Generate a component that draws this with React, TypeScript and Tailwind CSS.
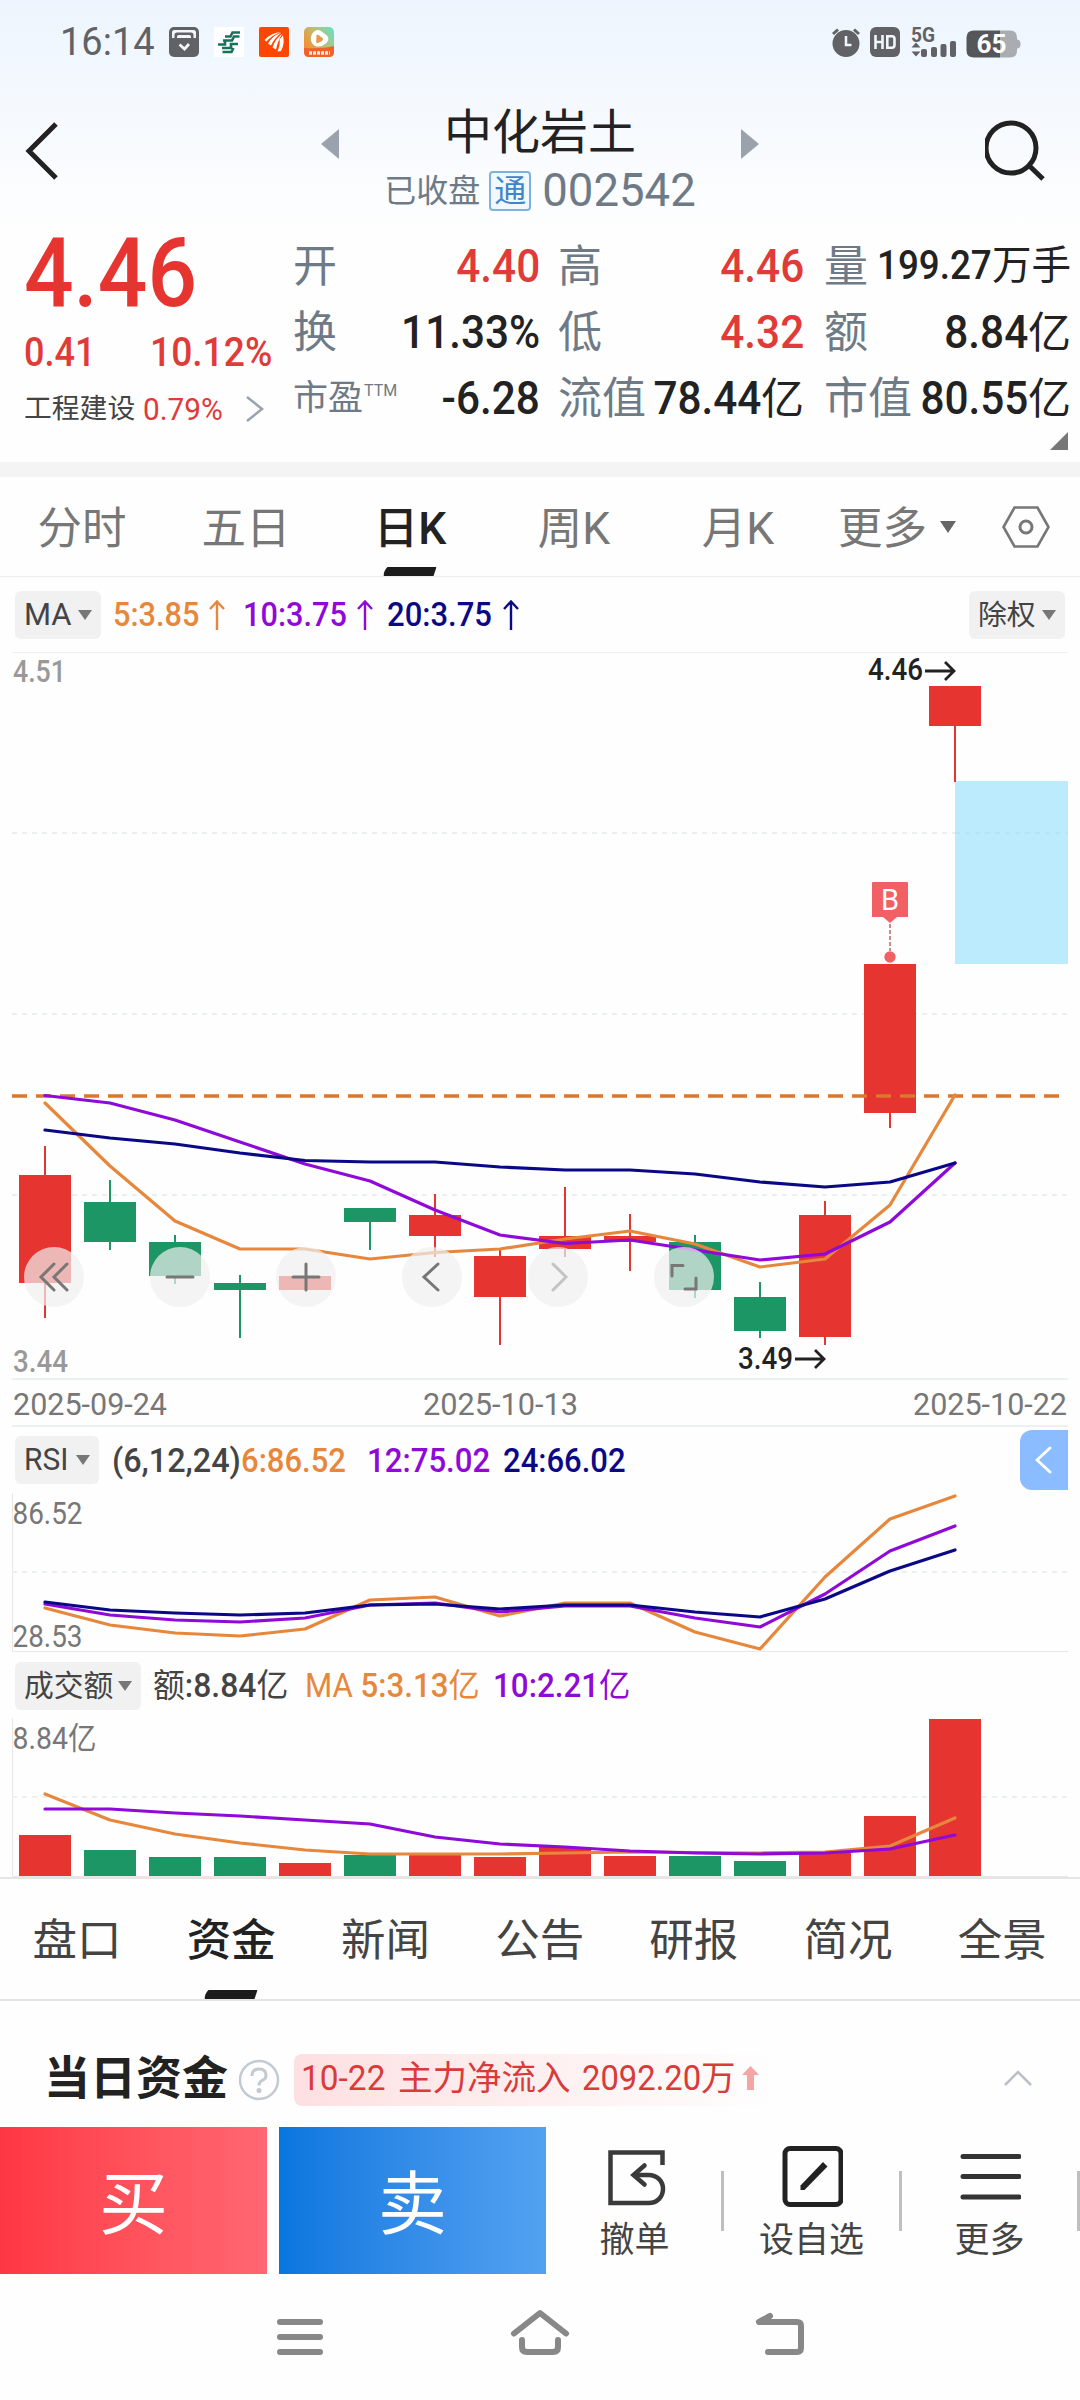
import type { ReactNode } from "react";
import clsx from "clsx";

const RED = "#e63431";
const GREEN = "#1b9664";
const ORANGE = "#e6873c";
const PURPLE = "#8f09d8";
const NAVY = "#0b0886";

type Candle = { open: number; close: number; high: number; low: number; up: boolean };

// y positions inside the price panel
const candles: Candle[] = [
  { open: 1175, close: 1283, high: 1146, low: 1318, up: true },
  { open: 1202, close: 1242, high: 1180, low: 1250, up: false },
  { open: 1242, close: 1276, high: 1235, low: 1284, up: false },
  { open: 1283, close: 1290, high: 1275, low: 1338, up: false },
  { open: 1276, close: 1290, high: 1276, low: 1290, up: true },
  { open: 1208, close: 1222, high: 1208, low: 1250, up: false },
  { open: 1215, close: 1236, high: 1194, low: 1257, up: true },
  { open: 1256, close: 1297, high: 1250, low: 1345, up: true },
  { open: 1236, close: 1249, high: 1187, low: 1257, up: true },
  { open: 1236, close: 1242, high: 1214, low: 1271, up: true },
  { open: 1242, close: 1290, high: 1235, low: 1298, up: false },
  { open: 1297, close: 1331, high: 1282, low: 1338, up: false },
  { open: 1215, close: 1337, high: 1201, low: 1345, up: true },
  { open: 964, close: 1113, high: 964, low: 1128, up: true },
  { open: 686, close: 726, high: 686, low: 782, up: true },
];

const ma5 = [1103, 1166, 1221, 1249, 1249, 1259, 1252.5, 1249, 1239, 1231, 1244, 1267, 1259, 1205, 1095];
const ma10 = [1095.5, 1103, 1120, 1142, 1164, 1181, 1210, 1235, 1243.5, 1240, 1250, 1260, 1254, 1222, 1163];
const ma20 = [1130, 1138, 1144, 1153, 1160.5, 1162, 1162, 1167, 1170, 1170, 1174, 1182, 1187, 1182, 1163];

const rsi6 = [1608, 1625, 1633, 1636, 1629, 1600, 1597, 1616, 1603, 1603, 1632, 1649, 1577, 1519, 1496];
const rsi12 = [1604, 1615, 1620, 1622, 1618, 1605, 1603, 1612, 1606, 1606, 1618, 1627, 1594, 1551, 1526];
const rsi24 = [1602, 1610, 1613, 1615, 1613, 1605, 1604, 1609, 1605, 1605, 1612, 1617, 1599, 1571, 1550];

const volume = [1835, 1850, 1857, 1857, 1863, 1855, 1855, 1857, 1847, 1856, 1856, 1861, 1853, 1816, 1719];
const vol5 = [1794, 1820, 1834, 1843, 1850, 1854, 1854, 1854, 1853, 1852, 1852.5, 1853, 1852, 1846, 1818];
const vol10 = [1809, 1809, 1813, 1816, 1820, 1824, 1837, 1844, 1847, 1851, 1853, 1854, 1853, 1849, 1835];

const xAt = (i: number) => 45 + i * 65;

const Line = ({ values, color }: { values: number[]; color: string }) => (
  <polyline
    points={values.map((y, i) => `${xAt(i)},${y}`).join(" ")}
    fill="none"
    stroke={color}
    strokeWidth={3.2}
    strokeLinejoin="round"
    strokeLinecap="round"
  />
);

const Grid = ({ y }: { y: number }) => (
  <line x1={12} x2={1068} y1={y} y2={y} stroke="#ebefef" strokeWidth={2} strokeDasharray="5 5" />
);

type LabelProps = { x: number; y: number; width: number; color: string; weight?: number; children: ReactNode };

const Label = ({ x, y, width, color, weight = 400, children }: LabelProps) => (
  <text x={x} y={y} fill={color} fontSize={30.5} fontWeight={weight} textLength={width} lengthAdjust="spacingAndGlyphs">
    {children}
  </text>
);

const Caret = ({ className }: { className?: string }) => (
  <svg viewBox="0 0 14 10" className={clsx("h-[10px] w-[14px] shrink-0", className)}>
    <path d="M0 0H14L7 10Z" fill="#777" />
  </svg>
);

const StatusBar = () => (
  <div className="flex h-[84px] items-center pl-[60px] pr-[59px]">
    <span className="w-[109px] text-[38px] text-[#606266]">16:14</span>
    <div className="flex gap-[15px]">
      <svg viewBox="0 0 30 30" className="size-[30px]">
        <rect width="30" height="30" rx="5" fill="#606266" />
        <path d="M3 11V5.500Q3 3 5.500 3H24.500Q27 3 27 5.500V11H24.500V8Q24.500 5.500 22 5.500H8Q5.500 5.500 5.500 8V11Z" fill="#f1f6fd" />
        <path d="M8 11V9.500Q8 8 9.500 8H20.500Q22 8 22 9.500V11Z" fill="#f1f6fd" />
        <path d="M10.500 17.500L15.500 22L20 17" fill="none" stroke="#f1f6fd" strokeWidth="2.800" />
      </svg>
      <svg viewBox="0 0 30 30" className="size-[30px] bg-white">
        <g fill="none" stroke="#17725c" strokeWidth="2.600">
          <path d="M26 5.500H18.500L16.500 9.500H11" />
          <path d="M25.500 9.500H20L18 13.500H9" />
          <path d="M4 17.500H11V13.500" />
          <path d="M24 17H17V21H8" />
          <path d="M19.500 21L17.500 25H8.500" />
        </g>
      </svg>
      <svg viewBox="0 0 30 30" className="size-[30px]">
        <rect width="30" height="30" rx="2" fill="#fe4603" />
        <path d="M5.500 13Q11 6.500 21.500 5Q12.500 8.500 7.500 14.500Z" fill="#fff" />
        <path d="M9 16.500Q13 9 22.500 5.500Q15.500 11 12 18.500Z" fill="#fff" />
        <path d="M13.500 20.500Q16 12 23.500 6.500Q19 13 17 22.500Z" fill="#fff" />
        <path d="M18.500 24.500Q21.500 17 20.500 12.500L24 8.500Q26 17 22 24Z" fill="#fff" />
      </svg>
      <svg viewBox="0 0 30 30" className="size-[30px]">
        <defs>
          <linearGradient id="tv" x1="0" y1=".6" x2="1" y2="0">
            <stop offset="0" stopColor="#f68e2e" />
            <stop offset=".5" stopColor="#b9c07a" />
            <stop offset="1" stopColor="#5fe3cd" />
          </linearGradient>
        </defs>
        <rect width="30" height="30" rx="5" fill="url(#tv)" />
        <path d="M0 21Q18 22 30 19V25Q30 30 25 30H5Q0 30 0 25Z" fill="#f0622a" />
        <path d="M12 3.500Q14 2.500 17 4L23 8.500Q26 12 22.500 16Q17 21 11 19Q6 16 7 10Q8 5 12 3.500Z" fill="#fff" />
        <path d="M12.500 8.500Q13 7.500 14.500 8L18.500 11Q20 12.500 18 14L14 16Q12.500 16.500 12.200 15Z" fill="#e79a4b" />
        <path d="M5 26H26" stroke="#ffe9da" strokeWidth="3.500" strokeDasharray="3 1" />
      </svg>
    </div>

    <div className="ml-auto flex items-center">
      <svg viewBox="0 0 30 29" className="mr-[9px] h-[29px] w-[30px]">
        <circle cx="15" cy="15.500" r="13.500" fill="#606266" />
        <path d="M2 6L7 1.500M28 6L23 1.500" stroke="#606266" strokeWidth="3" />
        <path d="M15 8V17H20.500" fill="none" stroke="#f1f6fd" strokeWidth="2.500" />
      </svg>
      <svg viewBox="0 0 30 30" className="mr-[11px] size-[30px]">
        <rect width="30" height="30" rx="6" fill="#606266" />
        <g fill="none" stroke="#f1f6fd" strokeWidth="2.600">
          <path d="M5.500 8V22M12.500 8V22M5.500 15H12.500" />
          <path d="M17.300 9.300H22Q24.500 9.300 24.500 12V18Q24.500 20.700 22 20.700H17.300Z" />
        </g>
      </svg>
      <svg viewBox="0 -5 45 35" className="-mt-[5px] mr-[10px] h-[35px] w-[45px]" fill="#606266">
        <text x="0" y="14.500" fontSize="19.500" fontWeight="700" textLength="24" lengthAdjust="spacingAndGlyphs">5G</text>
        <path d="M5 15.500L9.500 20.500H0.500ZM5 29.500L9.500 24.500H0.500Z" />
        <rect x="10" y="22" width="6" height="8" rx="2" />
        <rect x="20" y="20" width="6" height="10" rx="2" />
        <rect x="29.500" y="17" width="6" height="13" rx="2" />
        <rect x="39" y="14" width="6" height="16" rx="2" />
      </svg>
      <svg viewBox="0 0 55 28" className="mt-[3px] h-[28px] w-[55px]">
        <path d="M33 .5H44Q51 .5 51 7.500V9.500Q54.500 9.500 54.500 14T51 18.500V20.500Q51 27.500 44 27.500H33Z" fill="#a9acb1" />
        <path d="M8 .5H34V27.500H8Q.5 27.500 .5 20.500V7.500Q.5 .5 8 .5Z" fill="#545659" />
        <text x="10.500" y="23.200" fontSize="25" fontWeight="700" fill="#fff" textLength="30" lengthAdjust="spacingAndGlyphs">65</text>
      </svg>
    </div>
  </div>
);

const TitleBar = () => (
  <div className="flex h-[148px] items-start pl-[24px] pr-[33px]">
    <svg viewBox="0 0 35 60" className="mt-[37px] h-[60px] w-[35px]">
      <path d="M32 3L5 30L32 57" fill="none" stroke="#222" strokeWidth="5" />
    </svg>
    <div className="ml-[262px] flex items-start">
      <svg viewBox="0 0 18 30" className="mt-[45px] h-[30px] w-[18px]">
        <path d="M18 0V30L0 15Z" fill="#9aa3ad" />
      </svg>
      <div className="flex w-[402px] flex-col items-center pt-[25px]">
        <h1 className="text-[48px] font-normal text-[#222]">中化岩土</h1>
        <div className="mt-[13px] flex h-[41px] items-center text-[#6e7a86]">
          <span className="mr-[9px] text-[32px]">已收盘</span>
          <span className="mr-[11px] flex h-[40px] w-[42px] items-center justify-center rounded-[4px] border-2 border-[#7db2df] bg-[#f1f8ff] text-[32px] text-[#3f86c8]">
            通
          </span>
          <span className="text-[45.500px]">002542</span>
        </div>
      </div>
      <svg viewBox="0 0 18 30" className="mt-[45px] h-[30px] w-[18px]">
        <path d="M0 0V30L18 15Z" fill="#9aa3ad" />
      </svg>
    </div>
    <svg viewBox="0 0 62 62" className="ml-auto mt-[36px] size-[62px]">
      <circle cx="26" cy="28" r="25" fill="none" stroke="#222" strokeWidth="5" />
      <path d="M44 45.500L58 59" stroke="#222" strokeWidth="5" />
    </svg>
  </div>
);

type StatProps = { label: ReactNode; children: ReactNode; red?: boolean };

const Stat = ({ label, children, red }: StatProps) => (
  <div className="flex h-[66px] items-center justify-between whitespace-nowrap">
    <span className="pt-[3px] text-[44px] text-[#6e7a86]">{label}</span>
    <span
      className={clsx(
        "flex w-0 items-baseline justify-end pt-px text-[46px] font-medium",
        red ? "text-[#e03b38]" : "text-[#222]",
      )}
    >
      {children}
    </span>
  </div>
);

const Num = ({ children }: { children: ReactNode }) => (
  <span className="inline-block origin-right scale-x-[.92]">{children}</span>
);

const Unit = ({ children }: { children: ReactNode }) => <span className="text-[43px] font-normal">{children}</span>;

const Quote = () => (
  <section className="flex h-[230px]">
    <div className="w-[293px] pl-[24px]">
      <div className="mt-[-7px] h-[98px] origin-left scale-x-[.9] text-[97px] font-medium text-[#e63431]">4.46</div>
      <div className="mt-[10px] flex h-[40px] text-[40px] font-medium text-[#e03b38]">
        <span className="w-[126px] origin-left scale-x-[.9]">0.41</span>
        <span className="origin-left scale-x-[.93]">10.12%</span>
      </div>
      <div className="mt-[20px] flex h-[32px] items-center whitespace-nowrap">
        <span className="w-[119px] text-[27.800px] text-[#444]">工程建设</span>
        <span className="w-[103px] origin-left scale-x-[.96] text-[31px] text-[#e03b38]">0.79%</span>
        <svg viewBox="0 0 18 26" className="h-[26px] w-[18px]">
          <path d="M1 1L16 13L1 25" fill="none" stroke="#9aa3ad" strokeWidth="2.500" />
        </svg>
      </div>
    </div>
    <div className="w-[247px]">
      <Stat label="开" red><Num>4.40</Num></Stat>
      <Stat label="换"><Num>11.33%</Num></Stat>
      <Stat label={<span className="flex items-start text-[35px]">市盈<sup className="top-[2px] ml-px text-[16px]">TTM</sup></span>}>
        <Num>-6.28</Num>
      </Stat>
    </div>
    <div className="ml-[18px] w-[246px]">
      <Stat label="高" red><Num>4.46</Num></Stat>
      <Stat label="低" red><Num>4.32</Num></Stat>
      <Stat label="流值"><Num>78.44</Num><Unit>亿</Unit></Stat>
    </div>
    <div className="ml-[20px] w-[247px]">
      <Stat label="量">
        <span className="text-[40px]"><Num>199.27</Num></span>
        <span className="text-[39.500px] font-normal">万手</span>
      </Stat>
      <Stat label="额"><Num>8.84</Num><Unit>亿</Unit></Stat>
      <Stat label="市值"><Num>80.55</Num><Unit>亿</Unit></Stat>
      <svg viewBox="0 0 18 18" className="ml-auto mr-[3px] mt-[2px] size-[18px]">
        <path d="M18 0V18H0Z" fill="#777" />
      </svg>
    </div>
  </section>
);

const Underline = () => (
  <svg viewBox="0 0 53 9" className="absolute bottom-0 left-1/2 h-[9px] w-[53px] -translate-x-1/2">
    <path d="M4 0H53L50 9H0Q0 4 4 0Z" fill="#1c1c1c" />
  </svg>
);

const PeriodTabs = () => (
  <nav className="flex h-[100px] items-center border-b border-[#eee] text-[44.500px] text-[#777]">
    {["分时", "五日", "日K", "周K", "月K"].map((tab) => (
      <div
        key={tab}
        className={clsx(
          "relative flex h-full w-[164px] items-center justify-center pt-[5px]",
          tab === "日K" && "font-medium text-[#222]",
        )}
      >
        {tab}
        {tab === "日K" && <Underline />}
      </div>
    ))}
    <span className="ml-[18px] mr-[13px] pt-[5px]">更多</span>
    <svg viewBox="0 0 16 12" className="h-[12px] w-[16px]">
      <path d="M0 0H16L8 12Z" fill="#666" />
    </svg>
    <svg viewBox="0 0 48 42" className="ml-[46px] h-[42px] w-[48px]" fill="none" stroke="#777" strokeWidth="2.600">
      <path d="M12.500 1.500H35.500L46.500 21L35.500 40.500H12.500L1.500 21Z" />
      <circle cx="24" cy="21" r="6" strokeWidth="3" />
    </svg>
  </nav>
);

const Chip = ({ className, children }: { className: string; children: ReactNode }) => (
  <button className={clsx("flex h-[48px] items-center justify-between rounded-[6px] bg-[#f1f1f1] pl-[9px] pr-[9px] text-[#444]", className)}>
    {children}
    <Caret />
  </button>
);

const UpArrow = () => (
  <svg viewBox="0 0 16 30" className="h-[30px] w-[16px]" fill="none" stroke="currentColor" strokeWidth="2.400">
    <path d="M8 30V2M1 9L8 1.500L15 9" />
  </svg>
);

const Legend = ({ className, children }: { className: string; children: ReactNode }) => (
  <span className={clsx("shrink-0 origin-left whitespace-nowrap text-[33px] font-medium", className)}>{children}</span>
);

const MaLegend = () => (
  <div className="flex h-[75px] items-center pl-[15px] pr-[15px]">
    <Chip className="mr-[12px] w-[86px] text-[31px]">MA</Chip>
    <div className="flex items-center text-[#e6873c]">
      <Legend className="w-[96px]"><span className="inline-block origin-left scale-x-[.93]">5:3.85</span></Legend>
      <UpArrow />
    </div>
    <div className="ml-[18px] flex items-center text-[#8f09d8]">
      <Legend className="w-[114px]"><span className="inline-block origin-left scale-x-[.93]">10:3.75</span></Legend>
      <UpArrow />
    </div>
    <div className="ml-[14px] flex items-center text-[#0b0886]">
      <Legend className="w-[116px]"><span className="inline-block origin-left scale-x-[.94]">20:3.75</span></Legend>
      <UpArrow />
    </div>
    <Chip className="ml-auto w-[96px] text-[28.800px]"><span className="pt-[2px]">除权</span></Chip>
  </div>
);

const controls = [
  <path d="M30 17L17 30L30 43M43 17L30 30L43 43" />,
  <path d="M17 30H43" />,
  <path d="M17 30H43M30 17V43" />,
  <path d="M36 17L22 30L36 43" />,
  <path d="M25 17L38 30L25 43" stroke="#c4c4c4" />,
  <path d="M29 18.500H18V29M31 42H42V31" />,
];

const PriceChart = () => (
  <div className="relative h-[775px]">
    <svg viewBox="0 652 1080 775" className="h-[775px] w-[1080px]">
      <path d="M12 652.500H1068" stroke="#eee" />
      <Grid y={833} />
      <Grid y={1014} />
      <Grid y={1195} />
      <path d="M12 1379H1068M12 1426H1068" stroke="#edf0f1" strokeWidth={2} />
      <rect x={955} y={781} width={113} height={183} fill="#bdebfe" />
      <path d="M955 833H1068" stroke="#b6e4f6" strokeWidth={2} strokeDasharray="5 5" />

      {candles.map((c, i) => (
        <g key={i} fill={c.up ? RED : GREEN}>
          <rect x={xAt(i) - 1} y={c.high} width={2} height={c.low - c.high} />
          <rect x={xAt(i) - 26} y={c.open} width={52} height={c.close - c.open} />
        </g>
      ))}

      <path d="M12 1096H1068" stroke="#dc772e" strokeWidth={3.5} strokeDasharray="15 9" />
      <Line values={ma5} color={ORANGE} />
      <Line values={ma10} color={PURPLE} />
      <Line values={ma20} color={NAVY} />

      {/* buy marker */}
      <path d="M873 882H907Q908 882 908 883V917H897L890 923L883 917H872V883Q872 882 873 882Z" fill="#f06065" />
      <text x={890} y={909.500} fontSize={29} fill="#fff" textAnchor="middle">B</text>
      <path d="M890 924V951" stroke="#c98b8b" strokeWidth={2} strokeDasharray="4 2" />
      <circle cx={890} cy={957} r={5.700} fill="#f06065" />

      <Label x={868} y={680} width={55} color="#222" weight={500}>4.46</Label>
      <path d="M925 671H954M945 662L954 671L945 680" fill="none" stroke="#222" strokeWidth={2.800} />
      <Label x={738} y={1369} width={55} color="#222" weight={500}>3.49</Label>
      <path d="M795 1359H824M815 1350L824 1359L815 1368" fill="none" stroke="#222" strokeWidth={2.800} />

      <Label x={13} y={682} width={53} color="#999" weight={500}>4.51</Label>
      <Label x={13} y={1372} width={55} color="#999" weight={500}>3.44</Label>
      <Label x={13} y={1415} width={154} color="#777">2025-09-24</Label>
      <Label x={423} y={1415} width={155} color="#777">2025-10-13</Label>
      <Label x={913} y={1415} width={154} color="#777">2025-10-22</Label>
    </svg>
    <div className="absolute left-[24px] top-[595px] flex gap-[66px]">
      {controls.map((icon, i) => (
        <button key={i} className="size-[60px] rounded-full bg-[#f0f0f0]/70">
          <svg viewBox="0 0 60 60" className="size-[60px]" fill="none" stroke="#777" strokeWidth="3" strokeLinecap="round">
            {icon}
          </svg>
        </button>
      ))}
    </div>
  </div>
);

const RsiPanel = () => (
  <section className="relative">
    <div className="flex h-[66px] items-center pl-[15px]">
      <Chip className="mr-[13px] w-[84px] text-[30.500px]">
        <span className="-mr-2 origin-left scale-x-[.98]">RSI</span>
      </Chip>
      <Legend className="w-[129px] text-[#444]"><span className="inline-block origin-left scale-x-[.98]">(6,12,24)</span></Legend>
      <Legend className="w-[126px]"><span className="inline-block origin-left scale-x-[.94] text-[#e6873c]">6:86.52</span></Legend>
      <Legend className="w-[136px]"><span className="inline-block origin-left scale-x-[.945] text-[#8f09d8]">12:75.02</span></Legend>
      <Legend className="scale-x-[.94] text-[#0b0886]">24:66.02</Legend>
    </div>
    <svg viewBox="0 1493 1080 160" className="h-[160px] w-[1080px]">
      <path d="M12.500 1493V1651.500H1068" fill="none" stroke="#e8e8e8" />
      <Grid y={1572} />
      <Label x={12.500} y={1524} width={70} color="#777">86.52</Label>
      <Label x={12.500} y={1647} width={70} color="#777">28.53</Label>
      <Line values={rsi6} color={ORANGE} />
      <Line values={rsi12} color={PURPLE} />
      <Line values={rsi24} color={NAVY} />
    </svg>
    <button className="absolute right-[12px] top-[3px] flex h-[60px] w-[48px] items-center rounded-l-[12px] bg-[#8abcff] pl-[15px]">
      <svg viewBox="0 0 18 30" className="h-[30px] w-[18px]">
        <path d="M15 3L2 15L15 27" fill="none" stroke="#fff" strokeWidth="2.800" strokeLinecap="round" />
      </svg>
    </button>
  </section>
);

const VolumePanel = () => (
  <section>
    <div className="flex h-[65px] items-center pl-[15px]">
      <Chip className="mr-[12px] w-[126px] text-[29.800px]"><span className="pt-px">成交额</span></Chip>
      <Legend className="w-[152px] text-[#444]">
        <span className="inline-block origin-left scale-x-[.965]"><span className="font-normal">额</span>:8.84<span className="font-normal">亿</span></span>
      </Legend>
      <Legend className="w-[188px] text-[#e6873c]">
        <span className="inline-block origin-left scale-x-[.945]"><span className="font-normal">MA</span> 5:3.13<span className="font-normal">亿</span></span>
      </Legend>
      <Legend className="scale-x-[.95] text-[#8f09d8]">10:2.21<span className="font-normal">亿</span></Legend>
    </div>
    <svg viewBox="0 1718 1080 159" className="h-[159px] w-[1080px]">
      <path d="M12.500 1718V1876.500H1068" fill="none" stroke="#e8e8e8" />
      <Grid y={1797} />
      <Label x={12.500} y={1749} width={84} color="#777">8.84亿</Label>
      {volume.map((y, i) => (
        <rect key={i} x={xAt(i) - 26} y={y} width={52} height={1876 - y} fill={candles[i].up ? RED : GREEN} />
      ))}
      <Line values={vol5} color={ORANGE} />
      <Line values={vol10} color={PURPLE} />
    </svg>
  </section>
);

const InfoTabs = () => (
  <nav className="flex h-[124px] border-y-2 border-[#e5e5e5] text-[44.500px] text-[#444]">
    {["盘口", "资金", "新闻", "公告", "研报", "简况", "全景"].map((tab) => (
      <div
        key={tab}
        className={clsx(
          "relative flex w-[154.200px] items-center justify-center pt-[5px]",
          tab === "资金" && "font-medium text-[#222]",
        )}
      >
        {tab}
        {tab === "资金" && <Underline />}
      </div>
    ))}
  </nav>
);

const FundsHeader = () => (
  <section className="flex h-[126px] items-center pl-[44px] pt-[31px]">
    <h2 className="w-[194px] whitespace-nowrap pb-[4px] text-[46px] font-bold text-[#222]">当日资金</h2>
    <svg viewBox="0 0 42 42" className="size-[42px]" fill="none" stroke="#c3cad1" strokeWidth="2.500">
      <circle cx="21" cy="21" r="19" />
      <path d="M14 17Q14 10 21 10T28 16.500Q28 20 24 21.500Q21 23 21 26.500" strokeWidth="3" />
      <circle cx="21" cy="31.500" r="1.300" />
    </svg>
    <div className="ml-[14px] flex h-[52px] w-[480px] items-center whitespace-nowrap rounded-[8px] bg-linear-to-r from-[#fde0e1] to-transparent pb-[3px] pl-[7px] text-[34.500px] text-[#d93a3a]">
      <span className="w-[97px]"><span className="inline-block origin-left scale-x-[.97]">10-22</span></span>
      <span className="w-[184px]">主力净流入</span>
      <span className="w-[119px]"><span className="inline-block origin-left scale-x-[.95]">2092.20</span></span>
      <span>万</span>
      <svg viewBox="0 0 17 24" className="ml-[6px] h-[24px] w-[17px]">
        <path d="M8.500 0L17 9H12V24H5V9H0Z" fill="#f6a5a5" />
      </svg>
    </div>
    <svg viewBox="0 0 30 18" className="-mt-[3px] ml-auto mr-[47px] h-[18px] w-[30px]">
      <path d="M2 16L15 3L28 16" fill="none" stroke="#b9c0c7" strokeWidth="2.500" />
    </svg>
  </section>
);

const Action = ({ label, children, className }: { label: string; children: ReactNode; className: string }) => (
  <button className={clsx("flex flex-col items-center pt-[18px] text-[35px] text-[#444]", className)}>
    <svg viewBox="0 0 62 62" className="mb-[16px] size-[62px]" fill="none">
      {children}
    </svg>
    <span className="whitespace-nowrap">{label}</span>
  </button>
);

const Divider = () => <div className="mt-[44px] h-[60px] w-[3px] shrink-0 bg-[#bfbfbf]" />;

const TradeBar = () => (
  <footer className="flex h-[147px] overflow-hidden">
    <button className="flex w-[267px] shrink-0 items-center justify-center bg-linear-to-r from-[#ff3643] to-[#ff6772] pt-[10px] text-[69px] text-white">
      买
    </button>
    <button className="ml-[12px] flex w-[267px] shrink-0 items-center justify-center bg-linear-to-r from-[#0676de] to-[#52a2f1] pt-[10px] text-[69px] text-white">
      卖
    </button>
    <Action label="撤单" className="ml-[2px] w-[174px]">
      <g stroke="#3a3a3a" strokeWidth="4.500" transform="translate(2.500 0)">
        <path d="M56 20V7.500H4V58H42C51 58 56.500 51.500 56.500 44S51 30 42 30H27" />
        <path d="M38 20.500L27 30L38 39.500" strokeLinecap="round" />
      </g>
    </Action>
    <Divider />
    <Action label="设自选" className="w-[176px]">
      <rect x="4" y="3.500" width="56" height="56" rx="5" stroke="#222" strokeWidth="5" />
      <path d="M19.500 45V40.500L42 17L46.500 21.500L23.500 45Z" fill="#222" />
    </Action>
    <Divider />
    <Action label="更多" className="w-[176px]">
      <path d="M4 11.500H60M4 31.500H60M4 52H60" stroke="#333" strokeWidth="5" strokeLinecap="round" />
    </Action>
    <Divider />
  </footer>
);

const SystemNav = () => (
  <div className="flex h-[126px] items-start justify-between px-[275px] pt-[34px]">
    <svg viewBox="0 0 50 48" className="h-[48px] w-[50px]">
      <path d="M5 14H45M5 29H45M5 44H45" stroke="#888" strokeWidth="6" strokeLinecap="round" />
    </svg>
    <svg viewBox="0 0 60 48" className="h-[48px] w-[60px]" fill="none" stroke="#888" strokeWidth="6" strokeLinecap="round" strokeLinejoin="round">
      <path d="M4 25.500L30 5L56 25.500" />
      <path d="M12 32V39Q12 44 17 44H43Q48 44 48 39V32" />
    </svg>
    <svg viewBox="0 0 50 48" className="h-[48px] w-[50px]" fill="none" stroke="#888" strokeWidth="6" strokeLinecap="round" strokeLinejoin="round">
      <path d="M15 8L4 14H42Q46 14 46 18V40Q46 44 42 44H13" />
    </svg>
  </div>
);

export default function App() {
  return (
    <div className="flex h-[2400px] w-[1080px] flex-col overflow-hidden bg-[#fefefe] font-['Roboto','Noto_Sans_CJK_SC',sans-serif] leading-none [&_*]:leading-none">
      <header className="bg-linear-to-b from-[#edf5fe] to-[#fefefe]">
        <StatusBar />
        <TitleBar />
      </header>
      <Quote />
      <div className="h-[15px] bg-[#f4f4f4]" />
      <PeriodTabs />
      <MaLegend />
      <PriceChart />
      <RsiPanel />
      <VolumePanel />
      <InfoTabs />
      <FundsHeader />
      <TradeBar />
      <SystemNav />
    </div>
  );
}
